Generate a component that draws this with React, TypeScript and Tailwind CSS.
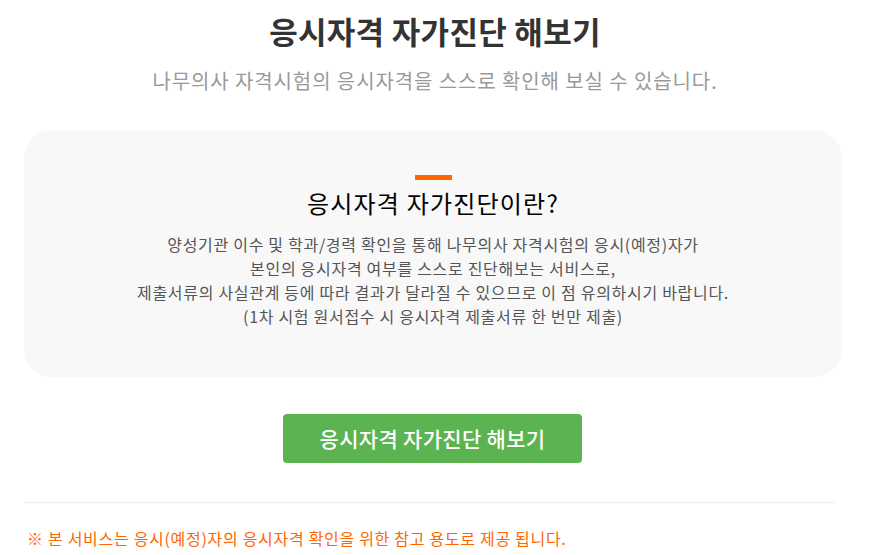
import React from 'react';

const font = { fontFamily: '"Noto Sans CJK KR", "Noto Sans", sans-serif' };

export default function App() {
  return (
    <div className="w-[870px] bg-white" style={font}>
      {/* Header */}
      <div className="pt-[10px] text-center">
        <h1 className="text-[31px] leading-[42px] font-bold text-[#333] tracking-[0.3px]">응시자격 자가진단 해보기</h1>
        <p className="mt-[16px] text-[20px] leading-[26px] text-[#999] tracking-[0.9px]">나무의사 자격시험의 응시자격을 스스로 확인해 보실 수 있습니다.</p>
      </div>

      {/* Info box */}
      <div className="ml-[24px] w-[818px] mt-[36px] h-[247px] rounded-[28px] bg-[#f8f8f8] flex flex-col items-center pt-[45px]">
        <div className="w-[37px] h-[5px] bg-[#ff6600]" />
        <h2 className="mt-[7px] text-[24px] leading-[32px] font-normal text-black tracking-[1.2px]">응시자격 자가진단이란?</h2>
        <div className="mt-[13px] text-center text-[16px] leading-[24px] text-[#555] tracking-[0.7px]">
          <p>양성기관 이수 및 학과/경력 확인을 통해 나무의사 자격시험의 응시(예정)자가</p>
          <p>본인의 응시자격 여부를 스스로 진단해보는 서비스로,</p>
          <p>제출서류의 사실관계 등에 따라 결과가 달라질 수 있으므로 이 점 유의하시기 바랍니다.</p>
          <p>(1차 시험 원서접수 시 응시자격 제출서류 한 번만 제출)</p>
        </div>
      </div>

      {/* Button */}
      <div className="ml-[283px] mt-[37px]">
        <button className="w-[299px] h-[49px] rounded-[4px] bg-[#5cb352] text-white text-[21px] font-medium tracking-[0.3px]">
          응시자격 자가진단 해보기
        </button>
      </div>

      {/* Divider */}
      <div className="ml-[24px] w-[812px] mt-[39px] border-t border-[#eeeeee]" />

      {/* Notice */}
      <p className="mt-[24px] px-[27px] text-[16px] leading-[22px] text-[#ff6600] tracking-[0.7px]">
        ※ 본 서비스는 응시(예정)자의 응시자격 확인을 위한 참고 용도로 제공 됩니다.
      </p>
    </div>
  );
}
